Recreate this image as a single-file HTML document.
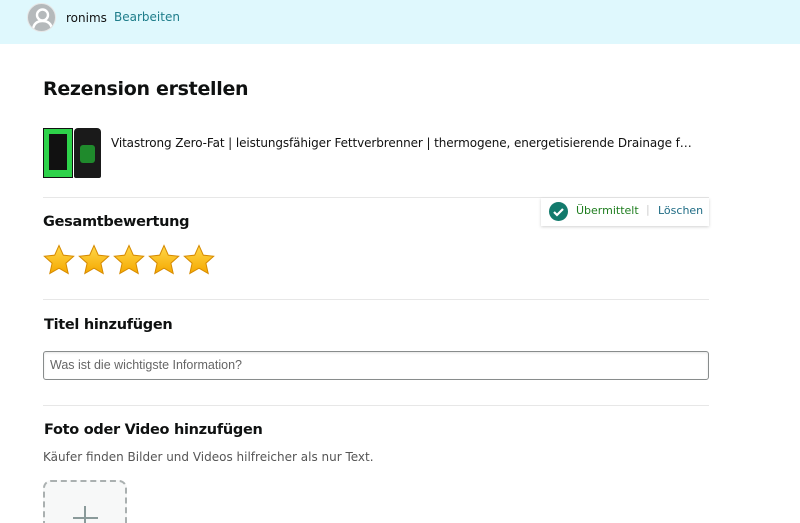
<!DOCTYPE html>
<html style="overflow:hidden;height:523px"><head><meta charset="utf-8"><style>
*{margin:0;padding:0;box-sizing:border-box}
body{width:800px;height:523px;overflow:hidden;background:#fff;font-family:"DejaVu Sans","Liberation Sans",sans-serif;color:#0f1111;position:relative}
.hdr{position:absolute;left:0;top:0;width:800px;height:44px;background:#dff8fd}
.av{position:absolute;left:27px;top:3px;width:29px;height:29px;border-radius:50%;background:#b5b9bb;border:1px solid #e6e6e6;overflow:hidden}
.a{position:absolute}
.h{font-weight:bold;letter-spacing:-0.3px}
.hr{position:absolute;left:43px;width:666px;height:1px;background:#e7e7e7}
</style></head><body>
<div class="hdr">
 <div class="av"><svg width="29" height="29" viewBox="0 0 29 29"><circle cx="14.5" cy="11" r="5.5" fill="none" stroke="#fff" stroke-width="2.4"/><path d="M5 25c1-6 5-8 9.5-8s8.5 2 9.5 8" fill="none" stroke="#fff" stroke-width="2.4"/></svg></div>
 <div class="a" style="left:66px;top:11px;font-size:12px;color:#111">ronims</div>
 <div class="a" style="left:114px;top:10px;font-size:12px;color:#1e7d8a">Bearbeiten</div>
</div>
<div class="a h" style="left:43px;top:78px;font-size:19px">Rezension erstellen</div>
<div class="a" style="left:43px;top:128px;width:30px;height:50px;background:#2ed24a;border:1px solid #111"></div>
<div class="a" style="left:49px;top:134px;width:18px;height:36px;background:#111"></div>
<div class="a" style="left:74px;top:128px;width:27px;height:50px;background:#1a1a1a;border-radius:4px 4px 2px 2px"></div>
<div class="a" style="left:80px;top:145px;width:15px;height:18px;background:#1f8a2c;border-radius:3px"></div>
<div class="a" style="left:111px;top:136px;font-size:12px;color:#111;white-space:nowrap;letter-spacing:-0.1px">Vitastrong Zero-Fat | leistungsfähiger Fettverbrenner | thermogene, energetisierende Drainage f…</div>
<div class="hr" style="top:197px"></div>
<div class="a" style="left:541px;top:198px;width:168px;height:28px;background:#fff;box-shadow:0 1px 3px rgba(0,0,0,.18)">
 <svg class="a" style="left:8px;top:4px" width="19" height="19" viewBox="0 0 19 19"><circle cx="9.5" cy="9.5" r="9.5" fill="#127a6c"/><path d="M5 10l3 3 6-6" fill="none" stroke="#fff" stroke-width="2.2"/></svg>
 <div class="a" style="left:35px;top:6px;font-size:11px;color:#1e7d1e">Übermittelt</div>
 <div class="a" style="left:105px;top:5px;font-size:11px;color:#ccc">|</div>
 <div class="a" style="left:117px;top:6px;font-size:11px;color:#1e6b84">Löschen</div>
</div>
<div class="a h" style="left:43px;top:214px;font-size:14.5px">Gesamtbewertung</div>
<div class="a" style="left:43px;top:244px">
<svg width="175" height="34" viewBox="0 0 175 34"><defs><linearGradient id="g" x1="0" y1="0" x2="0" y2="1"><stop offset="0" stop-color="#ffd84a"/><stop offset="1" stop-color="#f5a800"/></linearGradient><path id="s" d="M16 1.5l4.3 9.6 10.4 1.1-7.8 7 2.3 10.3L16 24.2l-9.2 5.3 2.3-10.3-7.8-7 10.4-1.1z" fill="url(#g)" stroke="#d68a00" stroke-width="1"/></defs>
<use href="#s" x="0"/><use href="#s" x="35"/><use href="#s" x="70"/><use href="#s" x="105"/><use href="#s" x="140"/></svg></div>
<div class="hr" style="top:299px"></div>
<div class="a h" style="left:44px;top:317px;font-size:14.5px">Titel hinzufügen</div>
<div class="a" style="left:43px;top:351px;width:666px;height:29px;border:1px solid #888c8c;border-radius:3px;box-shadow:inset 0 1px 2px rgba(0,0,0,.1)"></div>
<div class="a" style="left:50px;top:358px;font-size:12.5px;color:#666;font-family:'Liberation Sans',sans-serif">Was ist die wichtigste Information?</div>
<div class="hr" style="top:405px"></div>
<div class="a h" style="left:44px;top:422px;font-size:14.5px">Foto oder Video hinzufügen</div>
<div class="a" style="left:43px;top:450px;font-size:12px;color:#555">Käufer finden Bilder und Videos hilfreicher als nur Text.</div>
<div class="a" style="left:43px;top:480px;width:84px;height:60px;border:2px dashed #aab0b0;border-bottom:none;border-radius:8px 8px 0 0;background:#f7f8f8"></div>
<div class="a" style="left:73px;top:517px;width:25px;height:2px;background:#8a9a9a"></div>
<div class="a" style="left:84px;top:506px;width:2px;height:17px;background:#8a9a9a"></div>
</body></html>
